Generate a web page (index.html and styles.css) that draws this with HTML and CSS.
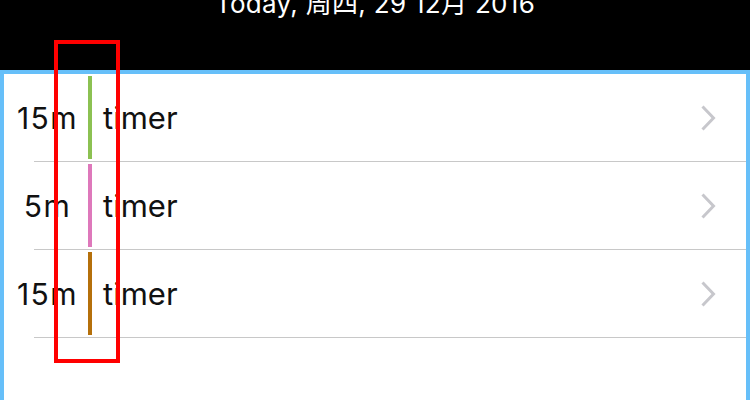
FILE: index.html
```html
<!DOCTYPE html>
<html>
<head>
<meta charset="utf-8">
<link rel="stylesheet" href="styles.css">
</head>
<body>
<div class="screen">
  <header class="header">
    <div class="date">Today, 周四, 29 12月 2016</div>
  </header>
  <main class="list">
    <div class="row">
      <div class="duration">15m</div>
      <div class="bar bar-green"></div>
      <div class="name">timer</div>
      <svg class="chevron" width="16" height="26" viewBox="0 0 16 26"><path d="M2.5 1.5 L13.5 13 L2.5 24.5" fill="none" stroke="#c7c7cc" stroke-width="3"/></svg>
    </div>
    <div class="sep"></div>
    <div class="row">
      <div class="duration">5m</div>
      <div class="bar bar-pink"></div>
      <div class="name">timer</div>
      <svg class="chevron" width="16" height="26" viewBox="0 0 16 26"><path d="M2.5 1.5 L13.5 13 L2.5 24.5" fill="none" stroke="#c7c7cc" stroke-width="3"/></svg>
    </div>
    <div class="sep"></div>
    <div class="row">
      <div class="duration">15m</div>
      <div class="bar bar-brown"></div>
      <div class="name">timer</div>
      <svg class="chevron" width="16" height="26" viewBox="0 0 16 26"><path d="M2.5 1.5 L13.5 13 L2.5 24.5" fill="none" stroke="#c7c7cc" stroke-width="3"/></svg>
    </div>
    <div class="sep"></div>
  </main>
  <div class="highlight"></div>
</div>
</body>
</html>
```
FILE: styles.css
```css
html, body {
  margin: 0;
  padding: 0;
  background: #000;
}
.screen {
  position: relative;
  width: 750px;
  height: 400px;
  overflow: hidden;
  font-family: Inter, "Noto Sans CJK SC", sans-serif;
}
.header {
  height: 70px;
  background: #000;
  overflow: hidden;
}
.date {
  color: #fff;
  font-size: 26px;
  line-height: 30px;
  text-align: center;
  margin-top: -11px;
  letter-spacing: 0.3px;
}
.list {
  background: #fff;
  border: 4px solid #66bff9;
  border-bottom: none;
  height: 330px;
  box-sizing: border-box;
}
.row {
  display: flex;
  align-items: center;
  height: 87px;
}
.duration {
  width: 81px;
  padding-left: 3px;
  text-align: center;
  font-size: 30px;
  letter-spacing: 1.5px;
  color: #111;
}
.bar {
  width: 4px;
  align-self: stretch;
  margin: 2px 0;
}
.bar-green { background: #8cc152; }
.bar-pink { background: #de78bb; }
.bar-brown { background: #b5700b; }
.name {
  flex: 1;
  margin-left: 11px;
  font-size: 31px;
  color: #111;
}
.chevron {
  margin-right: 30px;
}
.sep {
  height: 1px;
  margin-left: 30px;
  background: #c8c8c8;
}
.highlight {
  position: absolute;
  left: 54px;
  top: 40px;
  width: 66px;
  height: 323px;
  border: 4px solid #ff0000;
  box-sizing: border-box;
}
```
